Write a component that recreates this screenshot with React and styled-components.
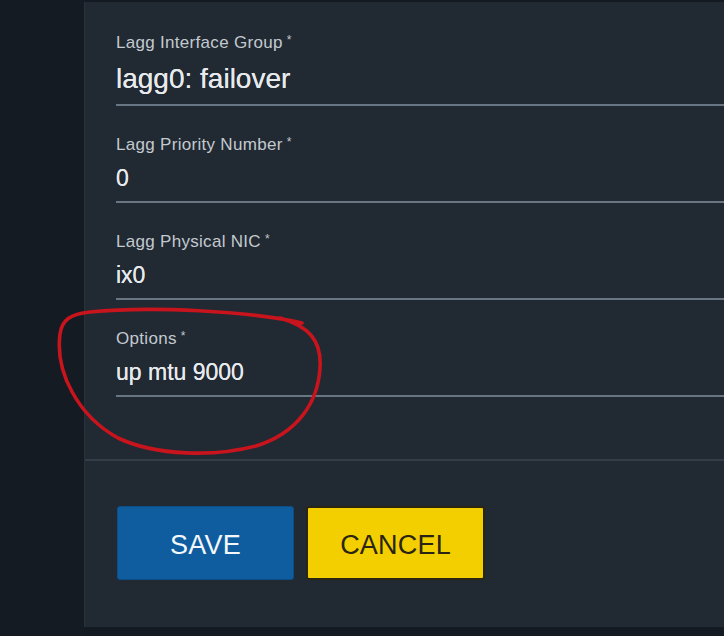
import React from "react";
import styled, { createGlobalStyle } from "styled-components";

const Global = createGlobalStyle`
  html, body { margin: 0; padding: 0; background: #141a21; }
  body { font-family: "Liberation Sans", Arial, sans-serif; }
`;

const Page = styled.div`
  position: relative;
  display: flex;
  width: 724px;
  height: 636px;
  overflow: hidden;
  background: #141a21;
`;

const Sidebar = styled.div`
  width: 84px;
  flex: none;
  background: #151b22;
`;

const Panel = styled.div`
  flex: 1;
  margin-top: 2px;
  height: 625px;
  background: #212933;
  border-left: 1px solid #29323c;
  display: flex;
  flex-direction: column;
`;

const Fields = styled.div`
  display: flex;
  flex-direction: column;
  gap: 29px;
  padding: 31px 0 0 31px;
`;

const Field = styled.div`
  display: flex;
  flex-direction: column;
  gap: ${(p) => (p.$large ? 10 : 9)}px;
  padding-bottom: 9px;
  border-bottom: 2px solid #687683;
`;

const Label = styled.div`
  height: 20px;
  font-size: 17px;
  line-height: 20px;
  letter-spacing: 0.3px;
  color: #c3c9cf;
`;

const Required = styled.span`
  font-size: 12px;
  line-height: 0;
  vertical-align: 4px;
  margin-left: 4px;
`;

const Value = styled.div`
  font-size: ${(p) => (p.$large ? 28 : 23)}px;
  line-height: ${(p) => (p.$large ? 32 : 28)}px;
  color: #e7eaed;
  text-shadow: 0 0 0.4px #e7eaed;
`;

const Divider = styled.div`
  margin-top: 62px;
  height: 2px;
  background: #333d48;
`;

const Actions = styled.div`
  display: flex;
  gap: 12px;
  padding: 45px 0 0 32px;
`;

const Button = styled.button`
  box-sizing: border-box;
  width: ${(p) => (p.$primary ? 177 : 179)}px;
  height: 74px;
  border-radius: 3px;
  font-family: "Liberation Sans", Arial, sans-serif;
  font-size: 27px;
  letter-spacing: 0.2px;
  cursor: pointer;
  background: ${(p) => (p.$primary ? "#0f5d9f" : "#f3cf00")};
  color: ${(p) => (p.$primary ? "#f4f8fb" : "#2a2414")};
  border: ${(p) => (p.$primary ? "1px solid #0c4f88" : "2px solid #2b2610")};
  padding: 4px 0 0;
`;

const Annotation = styled.svg`
  position: absolute;
  left: 0;
  top: 0;
  width: 724px;
  height: 636px;
  pointer-events: none;
`;

const fields = [
  { label: "Lagg Interface Group", value: "lagg0: failover", large: true },
  { label: "Lagg Priority Number", value: "0" },
  { label: "Lagg Physical NIC", value: "ix0" },
  { label: "Options", value: "up mtu 9000" },
];

export default function App() {
  return (
    <>
      <Global />
      <Page>
        <Sidebar />
        <Panel>
          <Fields>
            {fields.map((f) => (
              <Field key={f.label} $large={f.large}>
                <Label>
                  {f.label}
                  <Required>*</Required>
                </Label>
                <Value $large={f.large}>{f.value}</Value>
              </Field>
            ))}
          </Fields>
          <Divider />
          <Actions>
            <Button $primary>SAVE</Button>
            <Button>CANCEL</Button>
          </Actions>
        </Panel>
        <Annotation viewBox="0 0 724 636">
          <path
            d="M 302 323 C 250 311, 150 306, 90 312 C 70 314, 62 320, 60 334 C 55 372, 78 416, 118 438 C 156 456, 215 457, 256 446 C 298 433, 318 402, 320 368 C 322 340, 308 326, 280 318"
            fill="none"
            stroke="#c8141c"
            strokeWidth="3.6"
            strokeLinecap="round"
          />
        </Annotation>
      </Page>
    </>
  );
}
